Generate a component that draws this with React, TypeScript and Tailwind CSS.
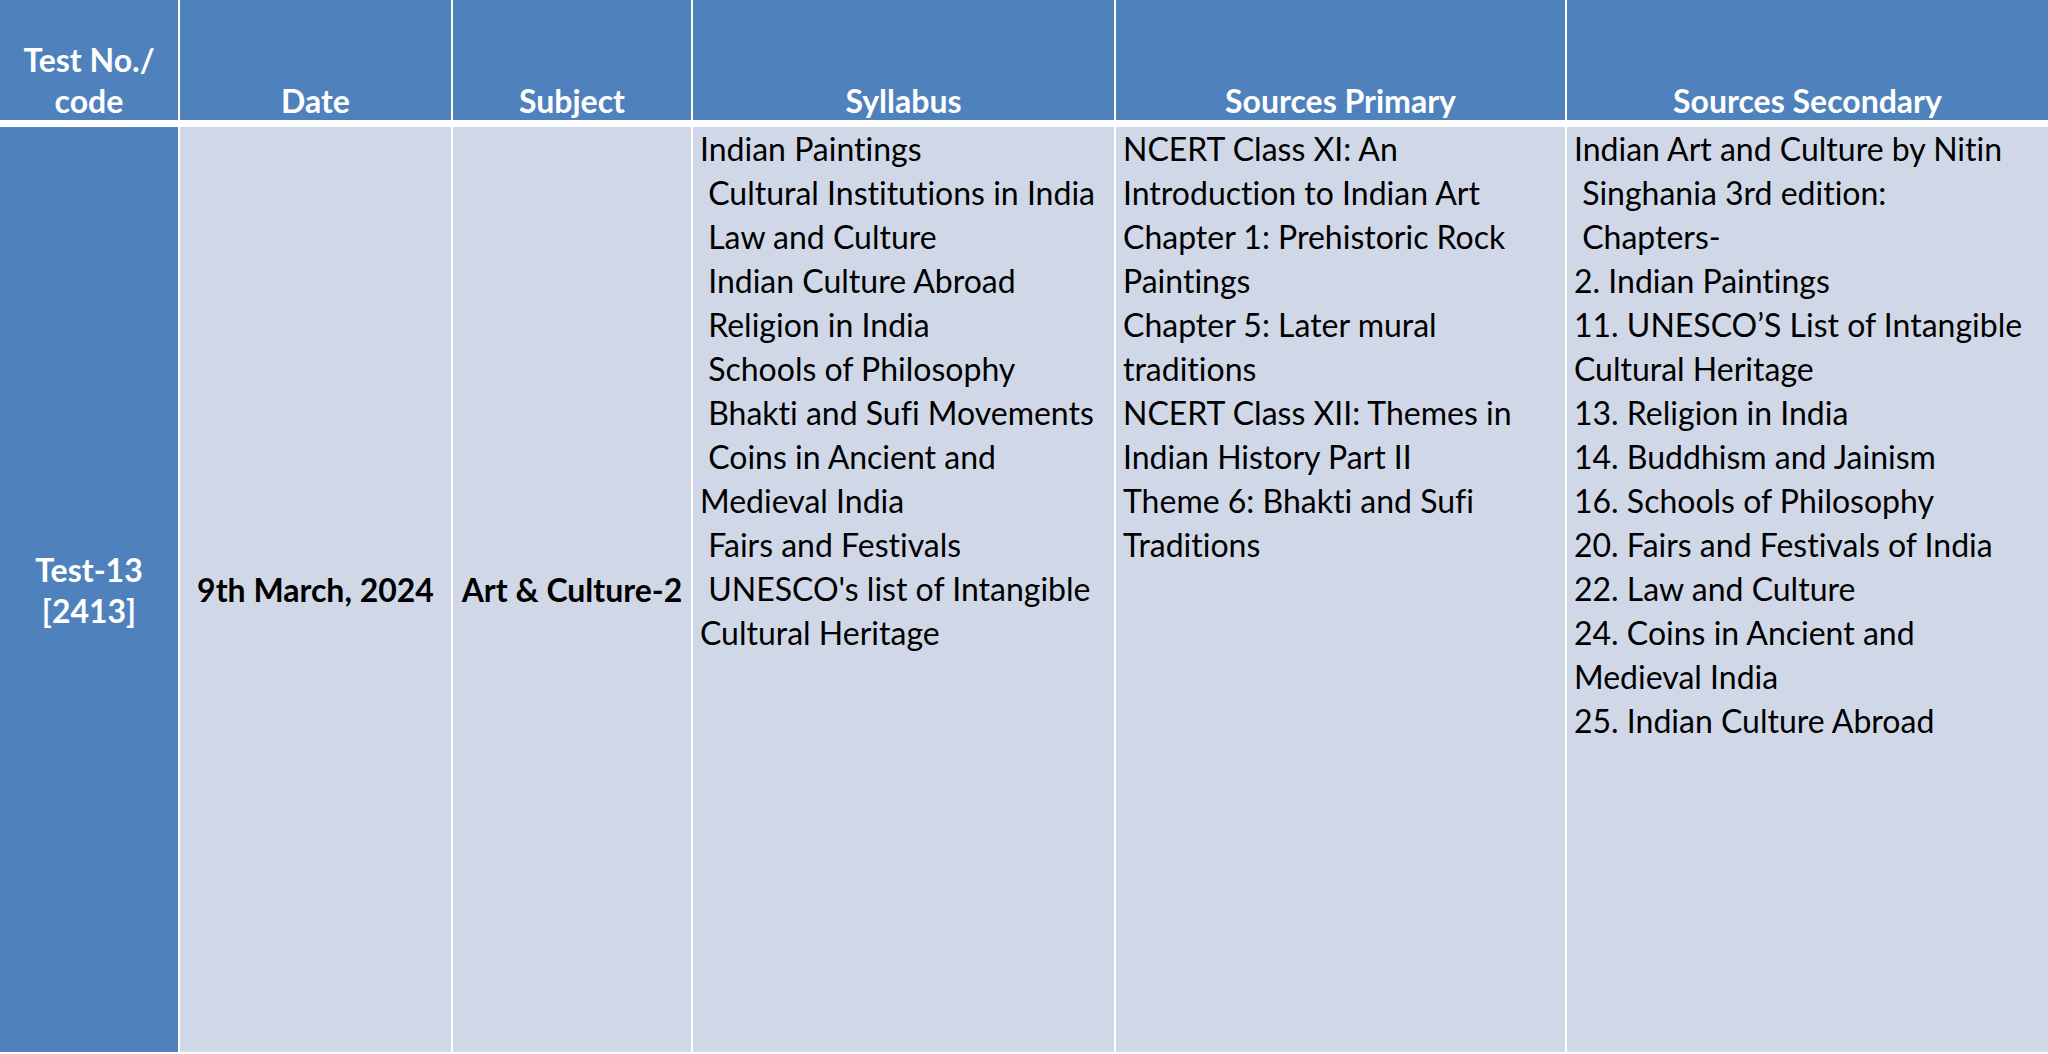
const syllabus = [
  'Indian Paintings',
  ' Cultural Institutions in India',
  ' Law and Culture',
  ' Indian Culture Abroad',
  ' Religion in India',
  ' Schools of Philosophy',
  ' Bhakti and Sufi Movements',
  ' Coins in Ancient and',
  'Medieval India',
  ' Fairs and Festivals',
  " UNESCO's list of Intangible",
  'Cultural Heritage',
]

const primary = [
  'NCERT Class XI: An',
  'Introduction to Indian Art',
  'Chapter 1: Prehistoric Rock',
  'Paintings',
  'Chapter 5: Later mural',
  'traditions',
  'NCERT Class XII: Themes in',
  'Indian History Part II',
  'Theme 6: Bhakti and Sufi',
  'Traditions',
]

const secondary = [
  'Indian Art and Culture by Nitin',
  ' Singhania 3rd edition:',
  ' Chapters-',
  '2. Indian Paintings',
  '11. UNESCO’S List of Intangible',
  'Cultural Heritage',
  '13. Religion in India',
  '14. Buddhism and Jainism',
  '16. Schools of Philosophy',
  '20. Fairs and Festivals of India',
  '22. Law and Culture',
  '24. Coins in Ancient and',
  'Medieval India',
  '25. Indian Culture Abroad',
]

function HeadCell({ lines }: { lines: string[] }) {
  return (
    <div className="flex flex-col items-center justify-end bg-[#4f81bd] text-[32px] font-bold leading-[41px] text-white">
      <div className="-mb-px">
        {lines.map((l) => (
          <div key={l} className="text-center">
            {l}
          </div>
        ))}
      </div>
    </div>
  )
}

function ListCell({ lines }: { lines: string[] }) {
  return (
    <div className="bg-[#d0d8e8] pl-[7px] text-[32px] leading-[44px] text-black">
      {lines.map((l, i) => (
        <div key={i} className="whitespace-pre">
          {l}
        </div>
      ))}
    </div>
  )
}

export default function App() {
  return (
    <div
      className="grid h-[1054px] w-[2048px] grid-cols-[178px_271px_238px_421px_449px_1fr] grid-rows-[120px_1fr] gap-x-[2px] gap-y-[7px] overflow-hidden bg-white pb-[2px] [font-variant-ligatures:none]"
      style={{ fontFamily: 'Lato, "Open Sans", sans-serif' }}
    >
      <HeadCell lines={['Test No./', 'code']} />
      <HeadCell lines={['Date']} />
      <HeadCell lines={['Subject']} />
      <HeadCell lines={['Syllabus']} />
      <HeadCell lines={['Sources Primary']} />
      <HeadCell lines={['Sources Secondary']} />

      <div className="flex flex-col items-center justify-center bg-[#4f81bd] text-[32px] font-bold leading-[41px] text-white">
        <div>Test-13</div>
        <div>[2413]</div>
      </div>
      <div className="flex items-center justify-center bg-[#d0d8e8] text-[32px] font-bold text-black">
        9th March, 2024
      </div>
      <div className="flex items-center justify-center bg-[#d0d8e8] text-[32px] font-bold text-black">
        Art &amp; Culture-2
      </div>
      <ListCell lines={syllabus} />
      <ListCell lines={primary} />
      <ListCell lines={secondary} />
    </div>
  )
}
